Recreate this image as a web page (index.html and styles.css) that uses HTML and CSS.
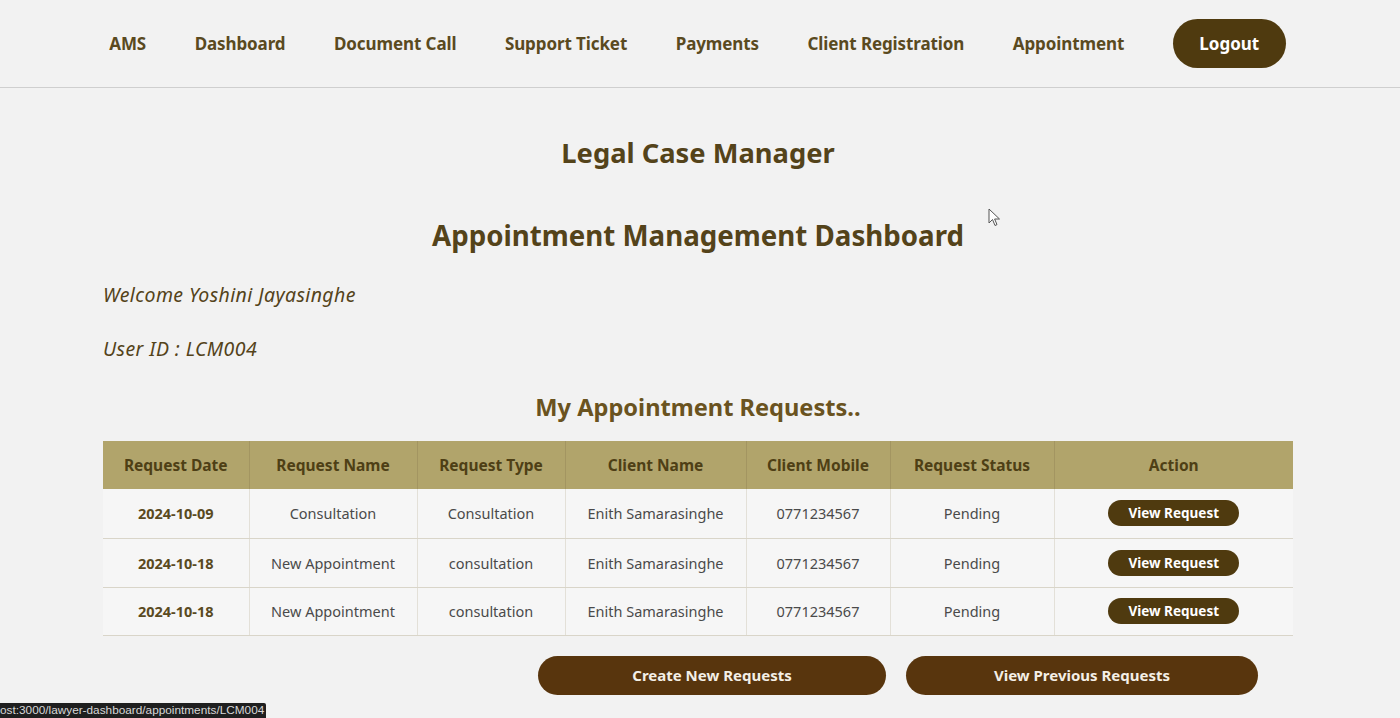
FILE: index.html
```
<!DOCTYPE html>
<html lang="en">
<head>
<meta charset="utf-8">
<title>Legal Case Manager - Appointments</title>
<link rel="stylesheet" href="styles.css">
</head>
<body>
<header class="nav">
  <a class="nav-link brand">AMS</a>
  <a class="nav-link">Dashboard</a>
  <a class="nav-link">Document Call</a>
  <a class="nav-link">Support Ticket</a>
  <a class="nav-link">Payments</a>
  <a class="nav-link">Client Registration</a>
  <a class="nav-link">Appointment</a>
  <button class="logout">Logout</button>
</header>
<main class="main">
  <h1 class="title">Legal Case Manager</h1>
  <h2 class="subtitle">Appointment Management Dashboard</h2>
  <p class="info">Welcome Yoshini Jayasinghe</p>
  <p class="info user">User ID : LCM004</p>
  <h3 class="section-title">My Appointment Requests..</h3>
  <table class="requests">
    <colgroup>
      <col class="c1"><col class="c2"><col class="c3"><col class="c4"><col class="c5"><col class="c6"><col class="c7">
    </colgroup>
    <thead>
      <tr>
        <th>Request Date</th><th>Request Name</th><th>Request Type</th><th>Client Name</th><th>Client Mobile</th><th>Request Status</th><th>Action</th>
      </tr>
    </thead>
    <tbody>
      <tr>
        <td class="date">2024-10-09</td><td>Consultation</td><td>Consultation</td><td>Enith Samarasinghe</td><td>0771234567</td><td>Pending</td><td><button class="view-btn">View Request</button></td>
      </tr>
      <tr>
        <td class="date">2024-10-18</td><td>New Appointment</td><td>consultation</td><td>Enith Samarasinghe</td><td>0771234567</td><td>Pending</td><td><button class="view-btn">View Request</button></td>
      </tr>
      <tr>
        <td class="date">2024-10-18</td><td>New Appointment</td><td>consultation</td><td>Enith Samarasinghe</td><td>0771234567</td><td>Pending</td><td><button class="view-btn">View Request</button></td>
      </tr>
    </tbody>
  </table>
  <div class="actions">
    <button class="big-btn create">Create New Requests</button>
    <button class="big-btn previous">View Previous Requests</button>
  </div>
</main>
<div class="status-url">ost:3000/lawyer-dashboard/appointments/LCM004</div>
<svg class="cursor" width="14" height="20" viewBox="0 0 14 20"><path d="M1 1 L1 15 L4.5 11.5 L7 17.5 L9 16.6 L6.6 11 L11.5 11 Z" fill="#fff" stroke="#555" stroke-width="1"/></svg>
</body>
</html>
```
FILE: styles.css
```
* { box-sizing: border-box; }
html, body { margin: 0; padding: 0; }
body {
  background: #f2f2f2;
  font-family: "Noto Sans", "Open Sans", sans-serif;
  color: #5a4a1f;
  width: 1400px;
  height: 718px;
  overflow: hidden;
  position: relative;
}
.nav {
  height: 88px;
  border-bottom: 1px solid #cfcfcf;
  display: flex;
  align-items: center;
  justify-content: center;
  gap: 48.5px;
  padding-right: 5px;
}
.nav-link {
  font-size: 17px;
  font-weight: 700;
  color: #5a4a1f;
  text-decoration: none;
  letter-spacing: -0.1px;
}
.logout {
  width: 113px;
  height: 49px;
  border: none;
  border-radius: 25px;
  background: #4f3a0f;
  color: #fff;
  font-family: inherit;
  font-size: 17px;
  font-weight: 700;
}
.main {
  margin: 0 107px 0 103px;
  display: flex;
  flex-direction: column;
}
.title {
  margin: 48px 0 0;
  text-align: center;
  font-size: 27.3px;
  line-height: 34px;
  font-weight: 700;
  color: #54431a;
}
.subtitle {
  margin: 47px 0 0;
  text-align: center;
  font-size: 27.7px;
  line-height: 36px;
  font-weight: 700;
  color: #54431a;
}
.info {
  margin: 30px 0 0;
  font-size: 19.5px;
  line-height: 24px;
  font-style: italic;
  letter-spacing: 0.4px;
  color: #54431a;
}
.section-title {
  margin: 31px 0 0;
  text-align: center;
  font-size: 23.6px;
  line-height: 30px;
  font-weight: 700;
  color: #6a5320;
}
.requests {
  margin-top: 19px;
  width: 1190px;
  border-collapse: collapse;
  table-layout: fixed;
  font-size: 14.5px;
}
.c1 { width: 146px; }
.c2 { width: 168px; }
.c3 { width: 148px; }
.c4 { width: 181px; }
.c5 { width: 144px; }
.c6 { width: 164px; }
.c7 { width: 239px; }
.requests th {
  background: #b1a46b;
  color: #4e3f15;
  height: 48px;
  font-size: 15.5px;
  font-weight: 700;
  border-right: 1px solid #a39561;
  padding: 0;
}
.requests th:last-child { border-right: none; }
.requests td {
  background: #f6f6f6;
  text-align: center;
  color: #4a4a4a;
  height: 49px;
  padding: 0;
  border-right: 1px solid #e3e0d8;
  border-bottom: 1px solid #d9d5c9;
}
.requests td:last-child { border-right: none; }
.requests tbody tr:last-child td { height: 48px; }
.requests td.date {
  color: #5a4a1f;
  font-weight: 700;
}
.view-btn {
  width: 131px;
  height: 26px;
  border: none;
  border-radius: 13px;
  background: #4f3a0f;
  color: #fff;
  font-family: inherit;
  font-size: 13.5px;
  font-weight: 700;
  padding: 0;
}
.actions {
  display: flex;
  justify-content: flex-end;
  gap: 20px;
  margin-top: 20px;
  padding-right: 35px;
}
.big-btn {
  height: 39px;
  border: none;
  border-radius: 20px;
  background: #58350d;
  color: #f4efe6;
  font-family: inherit;
  font-size: 15px;
  font-weight: 700;
}
.create { width: 348px; }
.previous { width: 352px; }
.status-url {
  position: absolute;
  left: 0;
  bottom: 0;
  width: 266px;
  height: 15px;
  background: #1f1f1f;
  color: #d8d8d8;
  font-family: "Liberation Sans", sans-serif;
  font-size: 11.8px;
  line-height: 15px;
  white-space: nowrap;
  overflow: hidden;
  border-top-right-radius: 2px;
}
.cursor {
  position: absolute;
  left: 988px;
  top: 208px;
}
```
